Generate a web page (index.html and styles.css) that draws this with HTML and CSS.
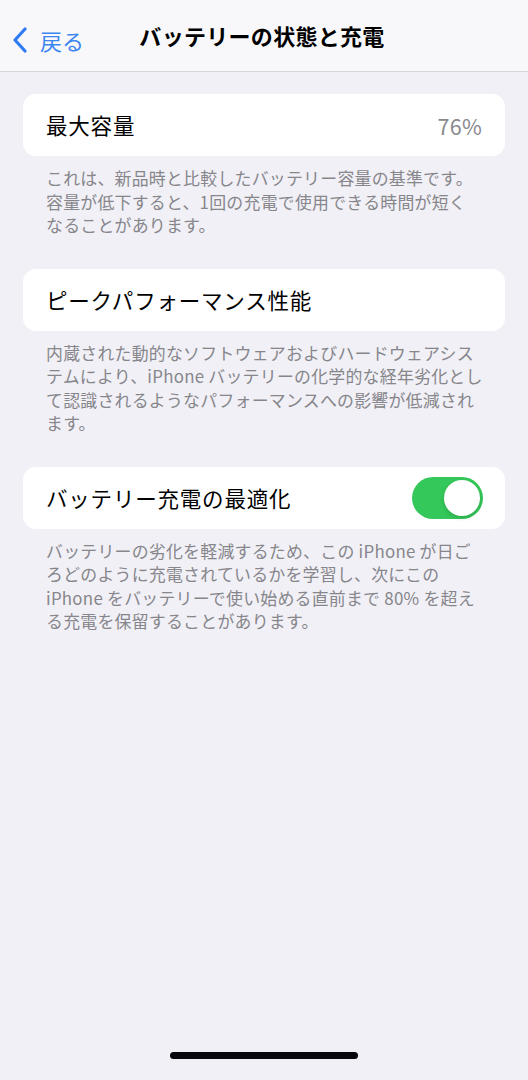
FILE: index.html
```html
<!DOCTYPE html>
<html lang="ja">
<head>
<meta charset="utf-8">
<link rel="stylesheet" href="styles.css">
</head>
<body>
<div class="screen">
  <header class="nav">
    <div class="back">
      <svg class="chev" width="16" height="26" viewBox="0 0 16 26"><path d="M13 2 L3 13 L13 24" fill="none" stroke="#2f7bf5" stroke-width="3.2" stroke-linecap="round" stroke-linejoin="round"/></svg>
      <span class="back-text">戻る</span>
    </div>
    <div class="title">バッテリーの状態と充電</div>
  </header>
  <main class="content">
    <section class="group first">
      <div class="card"><span class="label">最大容量</span><span class="value">76%</span></div>
      <p class="footer">これは、新品時と比較したバッテリー容量の基準です。<br>容量が低下すると、1回の充電で使用できる時間が短く<br>なることがあります。</p>
    </section>
    <section class="group">
      <div class="card"><span class="label">ピークパフォーマンス性能</span></div>
      <p class="footer">内蔵された動的なソフトウェアおよびハードウェアシス<br>テムにより、iPhone バッテリーの化学的な経年劣化とし<br>て認識されるようなパフォーマンスへの影響が低減され<br>ます。</p>
    </section>
    <section class="group">
      <div class="card"><span class="label">バッテリー充電の最適化</span><span class="toggle"><span class="knob"></span></span></div>
      <p class="footer">バッテリーの劣化を軽減するため、この iPhone が日ご<br>ろどのように充電されているかを学習し、次にこの<br>iPhone をバッテリーで使い始める直前まで 80% を超え<br>る充電を保留することがあります。</p>
    </section>
  </main>
  <div class="home"><span class="bar"></span></div>
</div>
</body>
</html>
```
FILE: styles.css
```css
* { box-sizing: border-box; }
html, body { margin: 0; padding: 0; }
body {
  background: #f1f0f6;
  font-family: "Noto Sans CJK JP", "Noto Sans", sans-serif;
  color: #000;
}
.screen {
  width: 528px;
  height: 1080px;
  display: flex;
  flex-direction: column;
}
.nav {
  height: 72px;
  background: #f8f8fa;
  border-bottom: 1px solid #d6d6d9;
  position: relative;
  display: flex;
  align-items: center;
  justify-content: center;
}
.back {
  position: absolute;
  left: 12px;
  top: 26px;
  display: flex;
  align-items: center;
  gap: 12px;
}
.back-text {
  color: #3c86f0;
  font-size: 22px;
  line-height: 28px;
}
.title {
  font-size: 22px;
  font-weight: 700;
  line-height: 28px;
  margin-top: -2px;
  margin-left: -4px;
  letter-spacing: 0.3px;
}
.content {
  flex: 1;
  padding: 22px 23px 0;
  display: flex;
  flex-direction: column;
  gap: 32px;
}
.card {
  background: #fff;
  border-radius: 13px;
  height: 62px;
  display: flex;
  align-items: center;
  justify-content: space-between;
  padding: 0 22px 0 23px;
}
.label {
  font-size: 21.5px;
  line-height: 28px;
  letter-spacing: 0.8px;
}
.value {
  font-size: 21.5px;
  color: #8a8a8e;
  margin-right: 1px;
  letter-spacing: 0.3px;
}
.toggle {
  width: 71px;
  height: 42px;
  border-radius: 21px;
  background: #34c759;
  display: flex;
  align-items: center;
  justify-content: flex-end;
  padding: 3px;
  margin-right: 0;
}
.knob {
  width: 36px;
  height: 36px;
  border-radius: 50%;
  background: #fff;
  box-shadow: 0 2px 4px rgba(0,0,0,0.15);
}
.footer {
  margin: 0;
  padding: 10px 0 0 23px;
  font-size: 16.9px;
  line-height: 23.5px;
  color: #86868b;
  white-space: nowrap;
  letter-spacing: 0.25px;
}
.home {
  height: 30px;
  display: flex;
  justify-content: center;
}
.bar {
  width: 188px;
  height: 7px;
  border-radius: 4px;
  background: #08070b;
  margin-top: 2px;
}
```
